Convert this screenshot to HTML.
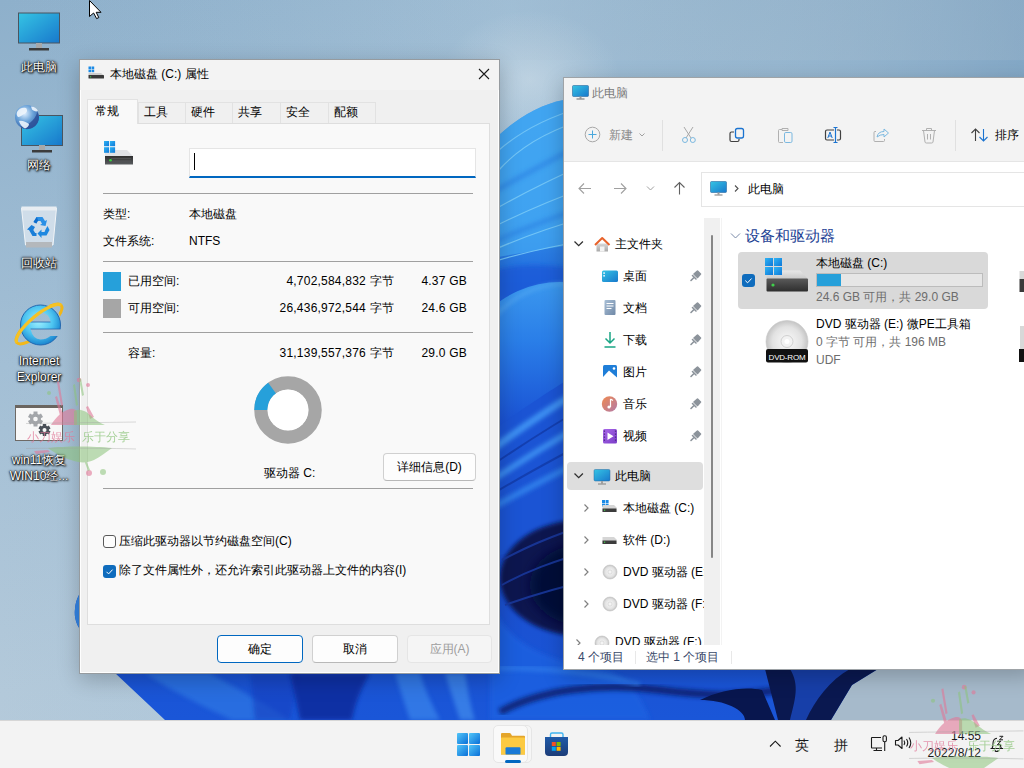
<!DOCTYPE html>
<html><head><meta charset="utf-8">
<style>
*{box-sizing:border-box;margin:0;padding:0}
html,body{width:1024px;height:768px;overflow:hidden}
body{position:relative;font-family:"Liberation Sans",sans-serif;font-size:12px;color:#000;background:#98b8d2}
.abs{position:absolute}
.n{letter-spacing:.22px}
.t{position:absolute;white-space:nowrap;line-height:16px}
#wall{position:absolute;left:0;top:0;width:1024px;height:768px}
/* desktop labels */
.dl{position:absolute;width:78px;left:0;text-align:center;color:#fff;font-size:12px;line-height:16px;text-shadow:0 0 1px #000,0 0 2px #000,1px 1px 2px #000,0 0 3px rgba(0,0,0,.6)}
/* dialog */
#dlg{position:absolute;left:79px;top:59px;width:421px;height:615px;background:#f0f0f0;border:1px solid rgba(40,50,60,.45);box-shadow:0 6px 20px rgba(0,0,0,.22),inset 0 0 0 1px rgba(255,255,255,.9)}
#dlg .title{position:absolute;left:0;top:0;width:100%;height:30px;background:#f3f3f3}
.tab{position:absolute;top:42px;height:22px;border:1px solid #e2e2e2;border-bottom:none;background:#f0f0f0;text-align:left;padding-left:5px;line-height:18px}
.tab.sel{top:39px;height:25px;background:#f9f9f9;z-index:2;line-height:23px}
#panel{position:absolute;left:7px;top:63px;width:403px;height:502px;background:#f9f9f9;border:1px solid #dedede}
.sep{position:absolute;height:1px;background:#a0a0a0}
.btn{position:absolute;height:28px;border:1px solid #d0d0d0;border-bottom-color:#b8b8b8;border-radius:4px;background:#fdfdfd;text-align:center;line-height:26px}
/* explorer */
#exp{position:absolute;left:563px;top:77px;width:471px;height:593px;background:#fff;border:1px solid rgba(40,50,60,.45);box-shadow:0 6px 20px rgba(0,0,0,.22);overflow:hidden}
#taskbar{position:absolute;left:0;top:720px;width:1024px;height:48px;background:#f3f3f3;border-top:1px solid #d6d6d6}
</style></head>
<body>
<svg id="wall" width="1024" height="768" viewBox="0 0 1024 768">
<defs>
<linearGradient id="bgG" x1="0" y1="0" x2="0.25" y2="1">
<stop offset="0" stop-color="#8eb0cb"/><stop offset="0.45" stop-color="#a3bfd5"/><stop offset="0.85" stop-color="#b3c9da"/><stop offset="1" stop-color="#b6cbdb"/>
</linearGradient>
<linearGradient id="bgR" x1="0" y1="0" x2="1" y2="0">
<stop offset="0" stop-color="#b0c4d4" stop-opacity="0"/><stop offset="1" stop-color="#9fb6c8" stop-opacity="1"/>
</linearGradient>
<linearGradient id="blG" x1="0" y1="0" x2="0" y2="1">
<stop offset="0" stop-color="#3b9cec"/><stop offset="0.2" stop-color="#3592ea"/><stop offset="0.32" stop-color="#1d64dc"/><stop offset="0.5" stop-color="#1748c8"/><stop offset="0.75" stop-color="#1a4fcf"/><stop offset="1" stop-color="#1a56d8"/>
</linearGradient>
<radialGradient id="navy" cx="0.5" cy="0.5" r="0.5">
<stop offset="0" stop-color="#050f3a"/><stop offset="0.6" stop-color="#0a1d62"/><stop offset="1" stop-color="#1640b0" stop-opacity="0"/>
</radialGradient>
<linearGradient id="bgH" x1="0" y1="0" x2="1" y2="0">
<stop offset="0" stop-color="#8cb2d0" stop-opacity=".0"/><stop offset="0.5" stop-color="#b4d0e4" stop-opacity=".35"/><stop offset="0.75" stop-color="#8cb0cc" stop-opacity=".2"/><stop offset="1" stop-color="#6e98bc" stop-opacity=".55"/>
</linearGradient>
<filter id="bl2"><feGaussianBlur stdDeviation="2"/></filter>
<filter id="bl6"><feGaussianBlur stdDeviation="6"/></filter>
</defs>
<rect width="1024" height="768" fill="url(#bgG)"/>
<rect width="1024" height="768" fill="url(#bgH)"/>
<radialGradient id="haze" cx="0.5" cy="0.5" r="0.5"><stop offset="0" stop-color="#dfe8ee" stop-opacity=".45"/><stop offset="1" stop-color="#dfe8ee" stop-opacity="0"/></radialGradient>
<ellipse cx="530" cy="80" rx="90" ry="70" fill="url(#haze)"/>

<rect x="800" y="600" width="224" height="130" fill="#a6bacb"/>
<path d="M165 720 L115 673 L84 634 C76 626 74 617 75 609 C76 598 80 592 86 586 L300 300 L499 135 C515 120 540 104 564 100 L700 90 L1024 90 L1024 300 L878 669 L852 685 L831 720 Z" fill="url(#blG)"/>
<path d="M84 634 C76 626 74 617 75 609 C76 598 80 592 86 586 L110 586 L110 634 Z" fill="#3384e4"/>
<!-- petal lines top -->
<path d="M499 135 C515 120 540 104 564 100 L600 100 L600 240 L480 260 Z" fill="#45aaf4" opacity=".7"/>
<path d="M499 150 C520 132 545 118 580 108" fill="none" stroke="#7ccaf8" stroke-width="1.2" opacity=".8"/>
<g fill="none" stroke="#2a7fe2" stroke-width="5" opacity=".6" filter="url(#bl2)">
<path d="M480 200 C510 182 540 166 590 140"/>
<path d="M480 248 C510 234 540 222 590 205"/>
</g>
<g fill="none" stroke="#7cccf8" stroke-width="1.2" opacity=".85">
<path d="M499 170 C515 152 540 132 590 118"/>
<path d="M480 218 C510 200 540 184 590 162"/>
<path d="M480 234 C510 218 540 204 590 186"/>
<path d="M480 256 C510 242 540 230 590 216"/>
<path d="M480 266 C510 256 540 248 590 240"/>
</g>
<path d="M480 276 C500 266 530 262 570 268 L600 275 L600 300 L480 300 Z" fill="#1a5ad8" opacity=".8" filter="url(#bl2)"/>
<linearGradient id="petG" x1="0" y1="0" x2="0" y2="1"><stop offset="0" stop-color="#3b98ee"/><stop offset="0.25" stop-color="#2a7ee8"/><stop offset="0.6" stop-color="#1a52d4"/><stop offset="1" stop-color="#1446c4"/></linearGradient>
<ellipse cx="560" cy="400" rx="110" ry="118" fill="url(#petG)"/>
<path d="M455 400 C470 320 520 286 560 284 C600 284 640 310 665 360" fill="none" stroke="#56aaf2" stroke-width="2.5" opacity=".85" filter="url(#bl2)"/>
<!-- diagonal petals mid -->
<path d="M480 440 C520 410 550 390 600 360 L600 530 L480 560 Z" fill="#1b54d4"/>
<g fill="none" stroke-linecap="round" filter="url(#bl2)">
<path d="M485 455 C520 428 550 408 600 378" stroke="#3d90f2" stroke-width="7"/>
<path d="M485 485 C520 462 550 442 600 415" stroke="#3a8cf0" stroke-width="6"/>
<path d="M485 512 C520 492 550 476 600 452" stroke="#2f7eea" stroke-width="6"/>
</g>
<g fill="none" stroke="#123aa8" stroke-width="2" opacity=".8">
<path d="M485 470 C520 446 550 426 600 398"/>
<path d="M485 498 C520 478 550 460 600 435"/>
</g>
<!-- dark navy core -->
<ellipse cx="582" cy="578" rx="82" ry="58" fill="#081550" filter="url(#bl2)"/>
<ellipse cx="590" cy="585" rx="60" ry="42" fill="#040c38" filter="url(#bl6)"/>
<g fill="none" stroke="#1a3aa0" stroke-width="2" opacity=".85">
<path d="M502 560 C525 548 545 538 600 520"/>
<path d="M502 585 C525 572 550 562 600 548"/>
<path d="M505 605 C530 596 555 588 600 578"/>
</g>
<path d="M490 600 C505 640 540 660 600 668 C620 672 640 690 650 720 L490 720 Z" fill="#1f60e0" opacity=".9" filter="url(#bl2)"/>
<!-- bottom strip features -->
<path d="M145 673 C170 690 200 705 232 720 L290 720 C260 700 230 685 210 673 Z" fill="#2f78e4" opacity=".7" filter="url(#bl2)"/>
<path d="M250 673 L300 673 L290 720 L255 720 Z" fill="#1240c0" opacity=".6" filter="url(#bl2)"/>
<path d="M290 673 L370 673 C360 690 355 705 352 720 L300 720 Z" fill="#0b2c9c" opacity=".85" filter="url(#bl2)"/>
<path d="M395 673 C400 690 405 705 410 720 L440 720 C432 705 425 690 420 673 Z" fill="#3a86ec" opacity=".7" filter="url(#bl2)"/>
<path d="M445 673 C450 690 455 705 460 720 L475 720 C470 705 468 690 465 673 Z" fill="#4a96f0" opacity=".6" filter="url(#bl2)"/>
<path d="M500 712 C540 690 600 682 660 690 C700 695 740 698 790 688" fill="none" stroke="#0a1d6a" stroke-width="7" opacity=".85" filter="url(#bl2)"/>
<path d="M499 668 C540 668 600 672 640 685" fill="none" stroke="#3584ee" stroke-width="5" opacity=".6" filter="url(#bl2)"/>
<path d="M700 700 C720 690 745 686 762 690 L775 720 L745 720 C745 710 725 700 700 700 Z" fill="#08164e"/>
<path d="M765 669 L878 669 L852 685 L831 720 L778 720 Z" fill="#0a1850"/>
<path d="M790 669 L850 669 C830 680 815 700 806 720 L790 720 C795 700 800 685 790 669 Z" fill="#1a46b8" opacity=".85"/>
<rect x="0" y="0" width="1024" height="60" fill="url(#bgR)" opacity=".3"/>
</svg>


<!-- desktop icon graphics -->
<svg class="abs" style="left:0;top:0" width="120" height="460" viewBox="0 0 120 460">
<defs>
<linearGradient id="scrG" x1="0" y1="0" x2="1" y2="1"><stop offset="0" stop-color="#35c4e4"/><stop offset="1" stop-color="#1878cc"/></linearGradient>
<radialGradient id="ieG" cx="0.45" cy="0.4" r="0.6"><stop offset="0" stop-color="#9ef0ff"/><stop offset="0.6" stop-color="#4cc4f0"/><stop offset="1" stop-color="#1a86d0"/></radialGradient>
<radialGradient id="glG" cx="0.4" cy="0.35" r="0.7"><stop offset="0" stop-color="#dfefff"/><stop offset="0.5" stop-color="#6aa2d8"/><stop offset="1" stop-color="#2f5fa8"/></radialGradient>
</defs>
<!-- this pc -->
<rect x="18.5" y="13" width="41" height="30" fill="url(#scrG)" stroke="#4a5560" stroke-width="1"/>
<rect x="36" y="43" width="6" height="5" fill="#a8a8a8"/>
<rect x="29" y="48" width="20" height="2.5" fill="#3c3c3c"/>
<!-- network -->
<rect x="21.5" y="115.5" width="41" height="30" fill="url(#scrG)" stroke="#4a5560" stroke-width="1"/>
<rect x="39" y="145" width="6" height="5" fill="#a8a8a8"/>
<rect x="32" y="150" width="20" height="2.5" fill="#3c3c3c"/>
<circle cx="27" cy="117" r="12" fill="url(#glG)"/>
<path d="M39 117 A12 12 0 0 1 20 126.8 C27 126 34 122 37.5 112 Z" fill="#2c4f96" opacity=".85"/>
<path d="M17 112 C19 108 23 107 26 108 C28 110 27 113 24 114 C22 115 20 117 18 117 C16.5 115.5 16.5 113.5 17 112 Z M19 121 C22 120 26 122 29 124 C29 126 27 128 25 128.5 C22 127 20 124.5 19 121 Z M31 106.5 C34 106.5 37 108.5 38 111 C36 112 33.5 111 32 109.5 Z" fill="#eef5fc" opacity=".9"/>
<!-- recycle bin -->
<path d="M21.5 208 L56.5 208 L53 245 L25.5 245 Z" fill="#e6edf3" fill-opacity=".7" stroke="#f2f5f8" stroke-width="1"/>
<rect x="21.5" y="206.5" width="35" height="4" fill="#e8edf2"/>
<rect x="26" y="242" width="26" height="5.5" fill="#b4b8bc"/>
<g fill="#1f88e0">
<path d="M33.5 222 L36.5 217 L42.5 217 L45 221 L47 220 L45.5 226 L40 225 L42 223.8 L40.5 221 L37.5 221 L36.3 223.5 Z" fill="#2a90e6"/>
<path d="M36.8 217 L33.5 222 L36.3 223.5 L38.2 220.5 Z" fill="#0f6ccc"/>
<path d="M47.5 226 L49.5 230 L46.5 235.5 L41.5 235.5 L41.5 238 L37.5 233.5 L41.5 229.5 L41.5 232 L44.5 232 L45.5 229.5 Z"/>
<path d="M31.5 225 L35 227 L33.3 230 L35.2 233 L36.5 233 L36.5 236 L32.5 236 L29 230 L27 229.5 Z" fill="#1a7ed8"/>
</g>
<!-- IE -->
<mask id="ieM"><rect x="0" y="290" width="80" height="70" fill="#fff"/><path d="M30.5 322 A10 9.5 0 0 1 50.5 322 Z" fill="#000"/><path d="M30.5 329 H62 V336 H50.5 Q46 339.5 40.5 339.5 Q33 339.5 30.5 329 Z" fill="#000"/></mask>
<mask id="ieR"><rect x="0" y="290" width="80" height="70" fill="#fff"/><circle cx="40.5" cy="325" r="20.5" fill="#000"/></mask>
<ellipse cx="39" cy="324" rx="29" ry="9" transform="rotate(-40 39 324)" fill="none" stroke="#f2b81a" stroke-width="3" mask="url(#ieR)"/>
<circle cx="40.5" cy="325" r="20" fill="url(#ieG)" stroke="#2368b0" stroke-width="1" mask="url(#ieM)"/>
<path d="M30.5 322 H50.5 M30.5 329 H60.5" stroke="#2368b0" stroke-width=".8"/>
<path d="M16.8 342.6 A29 9 -40 0 1 61.2 305.4" fill="none" stroke="#f6c224" stroke-width="3.2"/>
<!-- settings shortcut -->
<rect x="15.5" y="406" width="47" height="34.5" fill="#f8f8f8" stroke="#6e6a66" stroke-width="1"/>
<rect x="15" y="405" width="48" height="3" fill="#6a6560"/>
<g transform="translate(35.5 419)"><circle r="5.5" fill="#a3a6aa"/><g fill="#a3a6aa"><rect x="-2" y="-7.5" width="4" height="15"/><rect x="-2" y="-7.5" width="4" height="15" transform="rotate(60)"/><rect x="-2" y="-7.5" width="4" height="15" transform="rotate(120)"/></g><circle r="2.3" fill="#f8f8f8"/></g>
<g transform="translate(44.5 430)"><circle r="4.5" fill="#4a5058"/><g fill="#4a5058"><rect x="-1.7" y="-6" width="3.4" height="12"/><rect x="-1.7" y="-6" width="3.4" height="12" transform="rotate(60)"/><rect x="-1.7" y="-6" width="3.4" height="12" transform="rotate(120)"/></g><circle r="2" fill="#f8f8f8"/></g>
<!-- cursor -->
<path d="M89.5 0.5 L89.5 16.5 L93.6 13 L96.6 18.6 L98.8 17.6 L96.2 12.3 L101 12.3 Z" fill="#fff" stroke="#000" stroke-width="1" stroke-linejoin="round"/>
</svg>

<!-- desktop icons -->
<div class="dl" style="top:59px">此电脑</div>
<div class="dl" style="top:157px">网络</div>
<div class="dl" style="top:255px">回收站</div>
<div class="dl" style="top:353px">Internet<br>Explorer</div>
<div class="dl" style="top:452px">win11恢复<br>WIN10经...</div>

<!-- properties dialog -->
<div id="dlg">
  <div class="title"></div>
  <div class="tab sel" style="left:7px;width:51px;padding-left:7px">常规</div>
  <div class="tab" style="left:58px;width:48px">工具</div>
  <div class="tab" style="left:105px;width:48px">硬件</div>
  <div class="tab" style="left:152px;width:49px">共享</div>
  <div class="tab" style="left:200px;width:49px">安全</div>
  <div class="tab" style="left:248px;width:48px">配额</div>
  <div id="panel"></div>
  <div class="abs" style="left:1px;top:1px;width:417px;height:613px">
  <div class="t" style="left:29px;top:5px">本地磁盘 (C:) 属性</div>
  <div class="abs" style="left:108px;top:87px;width:287px;height:30px;background:#fff;border:1px solid #e5e5e5;border-bottom:2px solid #0067c0"></div>
  <div class="abs" style="left:113px;top:92px;width:1px;height:17px;background:#000"></div>
  <div class="sep" style="left:22px;top:132px;width:370px"></div>
  <div class="t" style="left:22px;top:145px">类型:</div>
  <div class="t" style="left:108px;top:145px">本地磁盘</div>
  <div class="t" style="left:22px;top:172px">文件系统:</div>
  <div class="t" style="left:108px;top:172px">NTFS</div>
  <div class="sep" style="left:22px;top:200px;width:370px"></div>
  <div class="abs" style="left:22px;top:211px;width:18px;height:19px;background:#26a0da"></div>
  <div class="t" style="left:47px;top:212px">已用空间:</div>
  <div class="t n" style="right:104px;top:212px">4,702,584,832 字节</div>
  <div class="t n" style="right:31px;top:212px">4.37 GB</div>
  <div class="abs" style="left:22px;top:238px;width:18px;height:19px;background:#a6a6a6"></div>
  <div class="t" style="left:47px;top:239px">可用空间:</div>
  <div class="t n" style="right:104px;top:239px">26,436,972,544 字节</div>
  <div class="t n" style="right:31px;top:239px">24.6 GB</div>
  <div class="sep" style="left:22px;top:271px;width:370px"></div>
  <div class="t" style="left:47px;top:284px">容量:</div>
  <div class="t n" style="right:104px;top:284px">31,139,557,376 字节</div>
  <div class="t n" style="right:31px;top:284px">29.0 GB</div>
  <svg class="abs" style="left:173px;top:315px" width="68" height="68" viewBox="0 0 68 68">
    <circle cx="34" cy="34" r="27" fill="none" stroke="#a6a6a6" stroke-width="13.5"/>
    <path d="M0.3 34 A33.7 33.7 0 0 1 14.2 6.7 L22 17.4 A20.5 20.5 0 0 0 13.5 34 Z" fill="#26a0da"/>
    <circle cx="34" cy="34" r="20.5" fill="#fff"/>
  </svg>
  <div class="t" style="left:183px;top:404px">驱动器 C:</div>
  <div class="btn" style="left:302px;top:392px;width:93px">详细信息(D)</div>
  <div class="sep" style="left:22px;top:427px;width:370px"></div>
  <div class="abs" style="left:22px;top:474px;width:13px;height:13px;border:1px solid #5a5a5a;border-radius:3px;background:#fdfdfd"></div>
  <div class="t" style="left:38px;top:472px">压缩此驱动器以节约磁盘空间(C)</div>
  <div class="abs" style="left:22px;top:504px;width:13px;height:13px;border-radius:3px;background:#0f6cbd"></div>
  <svg class="abs" style="left:22px;top:504px" width="13" height="13"><path d="M3.5 6.8 L5.6 8.9 L9.6 4.6" fill="none" stroke="#fff" stroke-width="1"/></svg>
  <div class="t" style="left:38px;top:501px">除了文件属性外，还允许索引此驱动器上文件的内容(I)</div>
  <div class="btn" style="left:136px;top:574px;width:86px;border:1px solid #0067c0">确定</div>
  <div class="btn" style="left:231px;top:574px;width:86px">取消</div>
  <div class="btn" style="left:326px;top:574px;width:85px;background:#f5f5f5;border-color:#e5e5e5;color:#9d9d9d">应用(A)</div>
  </div>
</div>

<!-- explorer -->
<div id="exp">
  <div class="abs" style="left:0;top:0;width:100%;height:84px;background:#f3f3f3;border-bottom:1px solid #e5e5e5"></div>
  <div class="t" style="left:28px;top:7px;color:#7a7a7a">此电脑</div>
  <div class="t" style="left:45px;top:49px;color:#8a8a8a">新建</div>
  <div class="abs" style="left:98px;top:42px;width:1px;height:31px;background:#e0e0e0"></div>
  <div class="abs" style="left:391px;top:42px;width:1px;height:31px;background:#e0e0e0"></div>
  <div class="t" style="left:431px;top:49px;">排序</div>
  <div class="abs" style="left:137px;top:94px;width:400px;height:35px;border:1px solid #e5e5e5;background:#fff"></div>
  <div class="t" style="left:184px;top:103px;">此电脑</div>
  <div class="abs" style="left:140px;top:140px;width:16px;height:427px;background:#f0f0f0"></div>
  <div class="abs" style="left:147px;top:157px;width:2px;height:323px;background:#868686;border-radius:1px"></div>
  <div class="abs" style="left:157px;top:140px;width:1px;height:427px;background:#f3f3f3"></div>
  <div class="abs" style="left:0;top:140px;width:140px;height:427px;overflow:hidden">
  <div class="abs" style="left:3px;top:244px;width:136px;height:28px;border-radius:4px;background:#dedede"></div>
  <div class="t" style="left:51px;top:18px;">主文件夹</div>
  <div class="t" style="left:59px;top:50px;">桌面</div>
  <div class="t" style="left:59px;top:82px;">文档</div>
  <div class="t" style="left:59px;top:114px;">下载</div>
  <div class="t" style="left:59px;top:146px;">图片</div>
  <div class="t" style="left:59px;top:178px;">音乐</div>
  <div class="t" style="left:59px;top:210px;">视频</div>
  <div class="t" style="left:51px;top:250px;">此电脑</div>
  <div class="t" style="left:59px;top:282px;">本地磁盘 (C:)</div>
  <div class="t" style="left:59px;top:314px;">软件 (D:)</div>
  <div class="t" style="left:59px;top:346px;">DVD 驱动器 (E:)</div>
  <div class="t" style="left:59px;top:378px;">DVD 驱动器 (F:)</div>
  <div class="t" style="left:51px;top:416px;">DVD 驱动器 (F:)</div>
  </div>
  <div class="t" style="left:181px;top:150px;font-size:15px;color:#1c3f94">设备和驱动器</div>
  <div class="abs" style="left:174px;top:174px;width:250px;height:57px;border-radius:4px;background:#d9d9d9"></div>
  <div class="t" style="left:252px;top:177px;">本地磁盘 (C:)</div>
  <div class="abs" style="left:252px;top:195px;width:167px;height:14px;background:#e6e6e6;border:1px solid #bcbcbc"></div>
  <div class="abs" style="left:253px;top:196px;width:24px;height:12px;background:#26a0da"></div>
  <div class="t" style="left:252px;top:211px;color:#6d6d6d">24.6 GB 可用，共 29.0 GB</div>
  <div class="t" style="left:252px;top:238px;">DVD 驱动器 (E:) 微PE工具箱</div>
  <div class="t" style="left:252px;top:256px;color:#6d6d6d">0 字节 可用，共 196 MB</div>
  <div class="t" style="left:252px;top:274px;color:#6d6d6d">UDF</div>
  <div class="abs" style="left:0;top:567px;width:100%;height:24px;background:#fff"></div>
  <div class="t" style="left:14px;top:571px;color:#3a4a6a">4 个项目</div>
  <div class="t" style="left:82px;top:571px;color:#3a4a6a">选中 1 个项目</div>
  <div class="abs" style="left:71px;top:573px;width:1px;height:13px;background:#e8e8e8"></div>
  <div class="abs" style="left:167px;top:573px;width:1px;height:13px;background:#e8e8e8"></div>
</div>

<div id="taskbar">
  <div class="abs" style="left:497px;top:4px;width:35px;height:38px;border-radius:5px;background:#f6f6f6;border:1px solid #e6e6e6"></div>
  <div class="abs" style="left:493px;top:4px;width:35px;height:38px;border-radius:5px;background:#f9f9f9;border:1px solid #e6e6e6"></div>
  <div class="t" style="left:795px;top:15px;font-size:14px;line-height:18px;color:#1a1a1a">英</div>
  <div class="t" style="left:834px;top:15px;font-size:14px;line-height:18px;color:#1a1a1a">拼</div>
  <div class="t" style="right:43px;top:8px;font-size:12px;line-height:14px;color:#1a1a1a">14:55</div>
  <div class="t" style="right:43px;top:25px;font-size:12px;line-height:14px;color:#1a1a1a">2022/8/12</div>
</div>

<!-- overlay icons -->
<svg id="ov" class="abs" style="left:0;top:0;pointer-events:none" width="1024" height="768" viewBox="0 0 1024 768">
<defs>
<linearGradient id="drvTop" x1="0" y1="0" x2="0" y2="1"><stop offset="0" stop-color="#e8e8e8"/><stop offset="1" stop-color="#c8c8c8"/></linearGradient>
<linearGradient id="drvFr" x1="0" y1="0" x2="0" y2="1"><stop offset="0" stop-color="#5a5a5a"/><stop offset="1" stop-color="#2e2e2e"/></linearGradient>
<linearGradient id="winG" x1="0" y1="0" x2="1" y2="1"><stop offset="0" stop-color="#2fb4f4"/><stop offset="1" stop-color="#0f78d8"/></linearGradient>
<linearGradient id="scr2" x1="0" y1="0" x2="1" y2="1"><stop offset="0" stop-color="#35c4e4"/><stop offset="1" stop-color="#1878cc"/></linearGradient>
<linearGradient id="homeG" x1="0" y1="0" x2="0" y2="1"><stop offset="0" stop-color="#d8d8d8"/><stop offset="1" stop-color="#a8a8a8"/></linearGradient>
<linearGradient id="docG" x1="0" y1="0" x2="1" y2="1"><stop offset="0" stop-color="#a9bfd6"/><stop offset="1" stop-color="#6f88a6"/></linearGradient>
<linearGradient id="musG" x1="0" y1="0" x2="1" y2="1"><stop offset="0" stop-color="#f08a50"/><stop offset="1" stop-color="#b27aa8"/></linearGradient>
<linearGradient id="vidG" x1="0" y1="0" x2="1" y2="1"><stop offset="0" stop-color="#a968e8"/><stop offset="1" stop-color="#7a3cc8"/></linearGradient>
<radialGradient id="discG" cx="0.5" cy="0.5" r="0.5"><stop offset="0" stop-color="#fafafa"/><stop offset="0.7" stop-color="#e2e2e2"/><stop offset="1" stop-color="#c4c4c4"/></radialGradient>
<g id="drvS"><path d="M0.5 5 L12 5 L14.5 7.5 L14.5 12 L0.5 12 Z" fill="#d6d6d6"/><rect x="0.5" y="8.5" width="14" height="3.5" fill="#3c3c3c"/><rect x="2" y="9.6" width="1.2" height="1.2" fill="#3fd04a"/></g>
<g id="winS"><rect x="0" y="0" width="3" height="3"/><rect x="3.6" y="0" width="3" height="3"/><rect x="0" y="3.6" width="3" height="3"/><rect x="3.6" y="3.6" width="3" height="3"/></g>
<g id="pin"><path d="M3 11 L5.5 8.5 M4.5 6 L8 9.5 M6 4.5 L9.5 1.5 L12.5 4.5 L9.5 8 Z" fill="#8c939b" stroke="#8c939b" stroke-width="1.6" stroke-linejoin="round" stroke-linecap="round"/></g>
<clipPath id="sbClip"><rect x="564" y="78" width="140" height="567"/></clipPath>
<g id="discS"><circle cx="7" cy="7" r="7" fill="url(#discG)" stroke="#c0c0c0" stroke-width=".6"/><circle cx="7" cy="7" r="2" fill="#f4f4f4" stroke="#cfcfcf" stroke-width=".6"/></g>
</defs>

<!-- dialog title icon -->
<g fill="#1a8ae6"><rect x="88.5" y="66.5" width="2.6" height="2.6"/><rect x="91.6" y="66.5" width="2.6" height="2.6"/><rect x="88.5" y="69.6" width="2.6" height="2.6"/><rect x="91.6" y="69.6" width="2.6" height="2.6"/></g>
<path d="M88.5 73 L101 73 L104 75.5 L88.5 75.5 Z" fill="#cfcfcf"/>
<rect x="88.5" y="75" width="15.5" height="3.6" rx=".6" fill="#3a3a3a"/>
<rect x="90" y="76.3" width="1.2" height="1.1" fill="#3fd04a"/>
<!-- close X -->
<path d="M479 69 L489 79 M489 69 L479 79" stroke="#1a1a1a" stroke-width="1.1"/>
<!-- big drive in panel -->
<linearGradient id="drvFr2" x1="0" y1="0" x2="0" y2="1"><stop offset="0" stop-color="#2f2f2f"/><stop offset="1" stop-color="#5a5d60"/></linearGradient>
<path d="M105 150 L127 150 L133 156.3 L105 156.3 Z" fill="#e0e2e6"/>
<rect x="105" y="156" width="28" height="8.5" fill="url(#drvFr2)"/>
<path d="M111 158.5 H131 M111 161 H131" stroke="#6a6d70" stroke-width=".4"/>
<circle cx="110.5" cy="160.3" r="1.3" fill="#38d040"/>
<g fill="url(#winG)"><rect x="104" y="141" width="5.1" height="5.2"/><rect x="110" y="141" width="5.1" height="5.2"/><rect x="104" y="147.2" width="5.1" height="5.6"/><rect x="110" y="147.2" width="5.1" height="5.6"/></g>

<!-- explorer title icon -->
<rect x="572.5" y="85.5" width="16" height="11" rx="1" fill="url(#scr2)" stroke="#2a6aa0" stroke-width=".6"/>
<rect x="579.5" y="96.5" width="2" height="2" fill="#9a9a9a"/><rect x="576.5" y="98.5" width="8" height="1" fill="#6a6a6a"/>
<!-- toolbar icons -->
<circle cx="592.5" cy="134.5" r="7.3" fill="none" stroke="#a8a8a8" stroke-width="1"/>
<path d="M592.5 130.5 V138.5 M588.5 134.5 H596.5" stroke="#4aa8dc" stroke-width="1"/>
<path d="M639.5 133.5 L642 136 L644.5 133.5" fill="none" stroke="#a0a0a0" stroke-width="1"/>
<path d="M684 127 L691 138 M693 127 L686 138" stroke="#a8a8a8" stroke-width="1"/>
<circle cx="685" cy="140" r="2.5" fill="none" stroke="#7ab8e0" stroke-width="1"/><circle cx="692.8" cy="140" r="2.5" fill="none" stroke="#7ab8e0" stroke-width="1"/>
<path d="M734 132 H731.5 Q730 132 730 133.5 V140 Q730 141.5 731.5 141.5 H737.5 Q739 141.5 739 140 V139" fill="none" stroke="#404040" stroke-width="1.2"/>
<rect x="735.5" y="128.5" width="8" height="9.5" rx="2" fill="#f3f3f3" stroke="#1a73d0" stroke-width="1.3"/>
<path d="M782 129.5 H779.5 Q778.5 129.5 778.5 130.5 V141.5 Q778.5 142.5 779.5 142.5 H783 M782 128.5 H788 V130.5 H782 Z" fill="none" stroke="#b0b0b0" stroke-width="1"/>
<rect x="784.5" y="132.5" width="7.5" height="10" rx="1.3" fill="none" stroke="#7ab8e0" stroke-width="1"/>
<path d="M834 130 H827 Q825.5 130 825.5 131.5 V138.5 Q825.5 140 827 140 H834 M837 130 H839 Q840.5 130 840.5 131.5 V138.5 Q840.5 140 839 140 H837" fill="none" stroke="#404040" stroke-width="1.2"/>
<path d="M827.8 138 L830 132 L832.2 138 M828.6 136 H831.4" fill="none" stroke="#1a73d0" stroke-width="1"/>
<path d="M835.5 127.5 V142.5 M833.5 127.5 H837.5 M833.5 142.5 H837.5" stroke="#1a73d0" stroke-width="1.2"/>
<path d="M876 131.5 H875 Q874 131.5 874 132.5 V140.5 Q874 141.5 875 141.5 H883.5 Q884.5 141.5 884.5 140.5 V139" fill="none" stroke="#b0b0b0" stroke-width="1"/>
<path d="M877 137 Q878 131.5 884 131.5 V129 L888.5 133 L884 137 V134.5 Q880 134.5 877 137 Z" fill="none" stroke="#7ab8e0" stroke-width="1" stroke-linejoin="round"/>
<path d="M922 130.5 H936 M926.5 130.5 V128.5 H931.5 V130.5 M923.5 130.5 L925 142 Q925.2 143 926.3 143 H931.7 Q932.8 143 933 142 L934.5 130.5 M927.5 134 V139.5 M930.5 134 V139.5" fill="none" stroke="#b0b0b0" stroke-width="1"/>
<path d="M975.5 141 V129 M971.5 133 L975.5 129 L979.5 133" fill="none" stroke="#404040" stroke-width="1.1"/>
<path d="M983.5 129 V141 M979.5 137 L983.5 141 L987.5 137" fill="none" stroke="#1a73d0" stroke-width="1.1"/>
<!-- nav arrows -->
<path d="M591 188.5 H579 M584 183.5 L579 188.5 L584 193.5" fill="none" stroke="#a0a0a0" stroke-width="1.1"/>
<path d="M614 188.5 H626 M621 183.5 L626 188.5 L621 193.5" fill="none" stroke="#a0a0a0" stroke-width="1.1"/>
<path d="M647 186.5 L650.5 190 L654 186.5" fill="none" stroke="#a0a0a0" stroke-width="1"/>
<path d="M679.5 194.5 V182.5 M674.5 187.5 L679.5 182.5 L684.5 187.5" fill="none" stroke="#606060" stroke-width="1.1"/>
<!-- address icon -->
<rect x="710.5" y="181.5" width="16" height="11" rx="1" fill="url(#scr2)" stroke="#2a6aa0" stroke-width=".6"/>
<rect x="717.5" y="192.5" width="2" height="2" fill="#9a9a9a"/><rect x="714.5" y="194.5" width="8" height="1" fill="#7a7a7a"/>
<path d="M735 185.5 L738 188.5 L735 191.5" fill="none" stroke="#505050" stroke-width="1.1"/>

<!-- sidebar -->
<path d="M574.5 241.5 L578.7 245.7 L582.9 241.5" fill="none" stroke="#303030" stroke-width="1.3"/>
<path d="M596.5 243.5 V251.5 H608 V243.5" fill="url(#homeG)"/>
<path d="M595 245 L602.2 238 L609.5 245" fill="none" stroke="#e8622a" stroke-width="2" stroke-linejoin="round"/>
<path d="M600 251.5 V246.5 H604.5 V251.5 Z" fill="#f4f4f4"/>
<rect x="602" y="270.5" width="16" height="11.5" rx="1.5" fill="url(#scr2)"/>
<rect x="603.3" y="272.3" width="1.6" height="1.6" fill="#e8f6ff"/><rect x="603.3" y="275" width="1.6" height="1.6" fill="#e8f6ff"/>
<rect x="604.5" y="300" width="11" height="15" rx="1" fill="url(#docG)"/>
<path d="M606.5 303.5 H613.5 M606.5 306 H613.5 M606.5 308.5 H611.5" stroke="#fff" stroke-width="1"/>
<path d="M610 332 V343 M605.5 338.5 L610 343 L614.5 338.5 M604.5 347 H615.5" fill="none" stroke="#1aa585" stroke-width="1.5"/>
<rect x="603" y="365" width="14" height="14" rx="1.5" fill="#1f7ed8"/>
<path d="M603 377 L609 370.5 L617 377.5 V379 H603 Z" fill="#fff"/><circle cx="614" cy="368.5" r="1.3" fill="#fff"/>
<circle cx="609.5" cy="404" r="7.7" fill="url(#musG)"/>
<path d="M610.5 399 V407 M610.5 399 L613 400.5" fill="none" stroke="#fff" stroke-width="1.2"/><circle cx="609" cy="407" r="1.6" fill="#fff"/>
<rect x="603" y="429" width="14" height="14.5" rx="1.5" fill="url(#vidG)"/>
<path d="M607.5 432.5 L613.5 436.2 L607.5 440 Z" fill="#fff"/>
<g fill="#4a2a80"><rect x="603.8" y="430.5" width="1.3" height="1.3"/><rect x="603.8" y="433.5" width="1.3" height="1.3"/><rect x="603.8" y="436.5" width="1.3" height="1.3"/><rect x="603.8" y="439.5" width="1.3" height="1.3"/><rect x="614.9" y="430.5" width="1.3" height="1.3"/><rect x="614.9" y="433.5" width="1.3" height="1.3"/><rect x="614.9" y="436.5" width="1.3" height="1.3"/><rect x="614.9" y="439.5" width="1.3" height="1.3"/></g>
<use href="#pin" x="688" y="269.5"/><use href="#pin" x="688" y="301.5"/><use href="#pin" x="688" y="333.5"/><use href="#pin" x="688" y="365.5"/><use href="#pin" x="688" y="397.5"/><use href="#pin" x="688" y="429.5"/>
<path d="M574.5 473.5 L578.7 477.7 L582.9 473.5" fill="none" stroke="#303030" stroke-width="1.3"/>
<rect x="594" y="469.5" width="16" height="11.5" rx="1.3" fill="url(#scr2)" stroke="#2a6aa0" stroke-width=".5"/>
<rect x="601" y="481" width="2" height="2.5" fill="#a0a0a0"/><rect x="598" y="483.5" width="8" height="1" fill="#808080"/>
<g fill="none" stroke="#808080" stroke-width="1.2"><path d="M584.5 504.5 L588 508 L584.5 511.5"/><path d="M584.5 536.5 L588 540 L584.5 543.5"/><path d="M584.5 568.5 L588 572 L584.5 575.5"/><path d="M584.5 600.5 L588 604 L584.5 607.5"/></g>
<g fill="#1a8ae6" transform="translate(602 500)"><use href="#winS"/></g>
<use href="#drvS" x="602" y="500"/>
<use href="#drvS" x="602" y="532"/>
<use href="#discS" x="603" y="565"/>
<use href="#discS" x="603" y="597"/>
<g clip-path="url(#sbClip)"><use href="#discS" x="595" y="636"/><path d="M576.5 639.5 L580 643 L576.5 646.5" fill="none" stroke="#808080" stroke-width="1.2"/></g>


<!-- taskbar icons -->
<defs>
<linearGradient id="stG" x1="0" y1="0" x2="1" y2="1"><stop offset="0" stop-color="#52c6f8"/><stop offset="1" stop-color="#0a6fd8"/></linearGradient>
<linearGradient id="bagG" x1="0" y1="0" x2="0" y2="1"><stop offset="0" stop-color="#1f5aa8"/><stop offset="1" stop-color="#1c3c78"/></linearGradient>
</defs>
<g fill="url(#stG)"><rect x="457" y="733" width="11" height="11" rx="1"/><rect x="469" y="733" width="11" height="11" rx="1"/><rect x="457" y="745" width="11" height="11" rx="1"/><rect x="469" y="745" width="11" height="11" rx="1"/></g>
<path d="M501 734 Q501 733 502 733 H509.5 Q510.5 733 511 734 L512 735.7 H524 Q525 735.7 525 736.7 V754.4 H501 Z" fill="#e4a52a"/>
<rect x="501" y="737.5" width="24" height="17" rx="0.6" fill="#fcca42"/>
<rect x="505.5" y="747.3" width="15" height="7.3" rx="1.2" fill="#1a7ad6"/>
<rect x="505" y="760" width="16" height="3" rx="1.5" fill="#0067c0"/>
<path d="M550.5 738 V734.5 Q550.5 733 552 733 H561.5 Q563 733 563 734.5 V738" fill="none" stroke="#3fb4f0" stroke-width="1.4"/>
<path d="M545 737 H568 V752 Q568 756 564 756 H549 Q545 756 545 752 Z" fill="url(#bagG)"/>
<rect x="551.8" y="742" width="4" height="4" fill="#f25022"/><rect x="556.6" y="742" width="4" height="4" fill="#7fba00"/><rect x="551.8" y="746.8" width="4" height="4" fill="#00a4ef"/><rect x="556.6" y="746.8" width="4" height="4" fill="#ffb900"/>
<path d="M770 746.5 L775.3 741.2 L780.6 746.5" fill="none" stroke="#1a1a1a" stroke-width="1.1"/>
<path d="M881 737.5 H872 Q871.5 737.5 871.5 738 V747.5 Q871.5 748 872 748 H882 M876.5 748 V750.5 M873.5 750.5 H882" fill="none" stroke="#1a1a1a" stroke-width="1.1"/>
<rect x="883" y="735.8" width="3.4" height="6" rx="1.5" fill="none" stroke="#1a1a1a" stroke-width="1.1"/>
<path d="M884.7 741.8 V751" stroke="#1a1a1a" stroke-width="1.1"/>
<path d="M895.5 740.5 H898 L902 737 V748.5 L898 745 H895.5 Z" fill="none" stroke="#1a1a1a" stroke-width="1.1" stroke-linejoin="round"/>
<path d="M904 740.5 Q905.5 742.8 904 745 M906.5 739 Q909 742.8 906.5 746.5 M909 737.5 Q912.5 742.8 909 748" fill="none" stroke="#1a1a1a" stroke-width="1.1"/>
<path d="M990.5 748.5 H1003 M992 748.5 Q993 747 993 743.5 Q993 738.5 997 738.2 M1001.5 748.5 Q1000.5 747 1000.5 745 M994.8 750.5 Q996.7 752.5 998.6 750.5" fill="none" stroke="#1a1a1a" stroke-width="1.1"/>
<path d="M997.3 741.3 H1000.8 L997.3 744.8 H1000.8 M999.5 736.3 H1003 L999.5 739.8 H1003" fill="none" stroke="#1a1a1a" stroke-width="1"/>


<!-- watermarks -->
<defs>
<g id="wm">
<g fill="#e07898" opacity=".6">
<path d="M27 50 C32 42 38 36 46 34 C50 33 52 35 53 37 L53 50 Z"/>
<path d="M33 7 L35 6 L39 30 L37 31 Z"/><path d="M31 22 L33 21 L40 43 L37 44 Z"/>
<path d="M62 32 L64 31 L70 42 L66 44 Z"/>
<circle cx="55" cy="5" r="2.3"/><circle cx="64" cy="10" r="2"/>
<circle cx="65" cy="98" r="3"/>
<path d="M10 76 L24 75 L26 77 L12 79 Z"/>
</g>
<g fill="#8cc47a" opacity=".55">
<path d="M50 50 L50 36 C55 33 62 36 66 40 C70 44 76 48 81 50 Z"/>
<path d="M49 10 L51 9 L54 30 L52 31 Z"/><path d="M55 4 L57 3.5 L60 20 L58 21 Z"/>
<circle cx="25" cy="18" r="2"/>
<path d="M24 73 C40 71 70 71 88 73 C82 77 76 82 70 85 C64 88 56 88 50 86 C42 84 32 79 24 73 Z"/>
<path d="M60 85 L62 85 L66 95 L64 96 Z"/>
<circle cx="79" cy="97" r="3"/>
</g>
<path d="M2 48.5 C30 48 80 47.5 112 47" stroke="#a0a0a0" stroke-width=".7" fill="none" opacity=".55"/>
<path d="M2 73.5 C30 73 80 73 112 74" stroke="#a0a0a0" stroke-width=".7" fill="none" opacity=".55"/>
<text x="3" y="65.5" font-family="Liberation Sans" font-size="12" fill="#e07898" opacity=".75" letter-spacing="0">小刀娱乐</text>
<text x="58" y="65.5" font-family="Liberation Sans" font-size="12" fill="#8cc47a" opacity=".75" letter-spacing="0">乐于分享</text>
</g>
</defs>
<use href="#wm" transform="translate(24 375)"/>
<use href="#wm" transform="translate(907 682) scale(1.04)"/>

<!-- content -->
<path d="M731 233.5 L735.5 238 L740 233.5" fill="none" stroke="#7a8aa8" stroke-width="1"/>
<rect x="742" y="274" width="13" height="13" rx="3" fill="#0f6cbd"/>
<path d="M745.3 280.6 L747.6 282.8 L751.6 278.5" fill="none" stroke="#fff" stroke-width="1"/>
<path d="M766.5 279 L766.5 270.5 L800 270.5 L808 279 Z" fill="url(#drvTop)"/>
<rect x="766.5" y="278.5" width="41.5" height="13" rx="1" fill="url(#drvFr)"/>
<circle cx="773" cy="285" r="1.6" fill="#3fd04a"/>
<g fill="url(#winG)"><rect x="765" y="258" width="8" height="8"/><rect x="774" y="258" width="8" height="8"/><rect x="765" y="267" width="8" height="8"/><rect x="774" y="267" width="8" height="8"/></g>

<circle cx="787" cy="341.5" r="21" fill="url(#discG)" stroke="#c8c8c8" stroke-width=".6"/>
<circle cx="787" cy="341.5" r="6" fill="#f2f2f2" stroke="#d0d0d0" stroke-width="1"/><circle cx="787" cy="341.5" r="2.5" fill="#fff"/>
<rect x="766" y="349" width="42" height="13.5" rx="2" fill="#111"/>
<text x="787" y="359.6" font-family="Liberation Sans" font-size="8" fill="#fff" text-anchor="middle" letter-spacing="-.2">DVD-ROM</text>
<!-- partial right tile items -->
<rect x="1019.5" y="271" width="6" height="8" fill="#d8d8d8"/><rect x="1019.5" y="279" width="6" height="13" fill="#3a3a3a"/>
<rect x="1020" y="326" width="6" height="36" fill="#d8d8d8"/><rect x="1019" y="349" width="6" height="13" fill="#111"/>
</svg>

</body></html>
